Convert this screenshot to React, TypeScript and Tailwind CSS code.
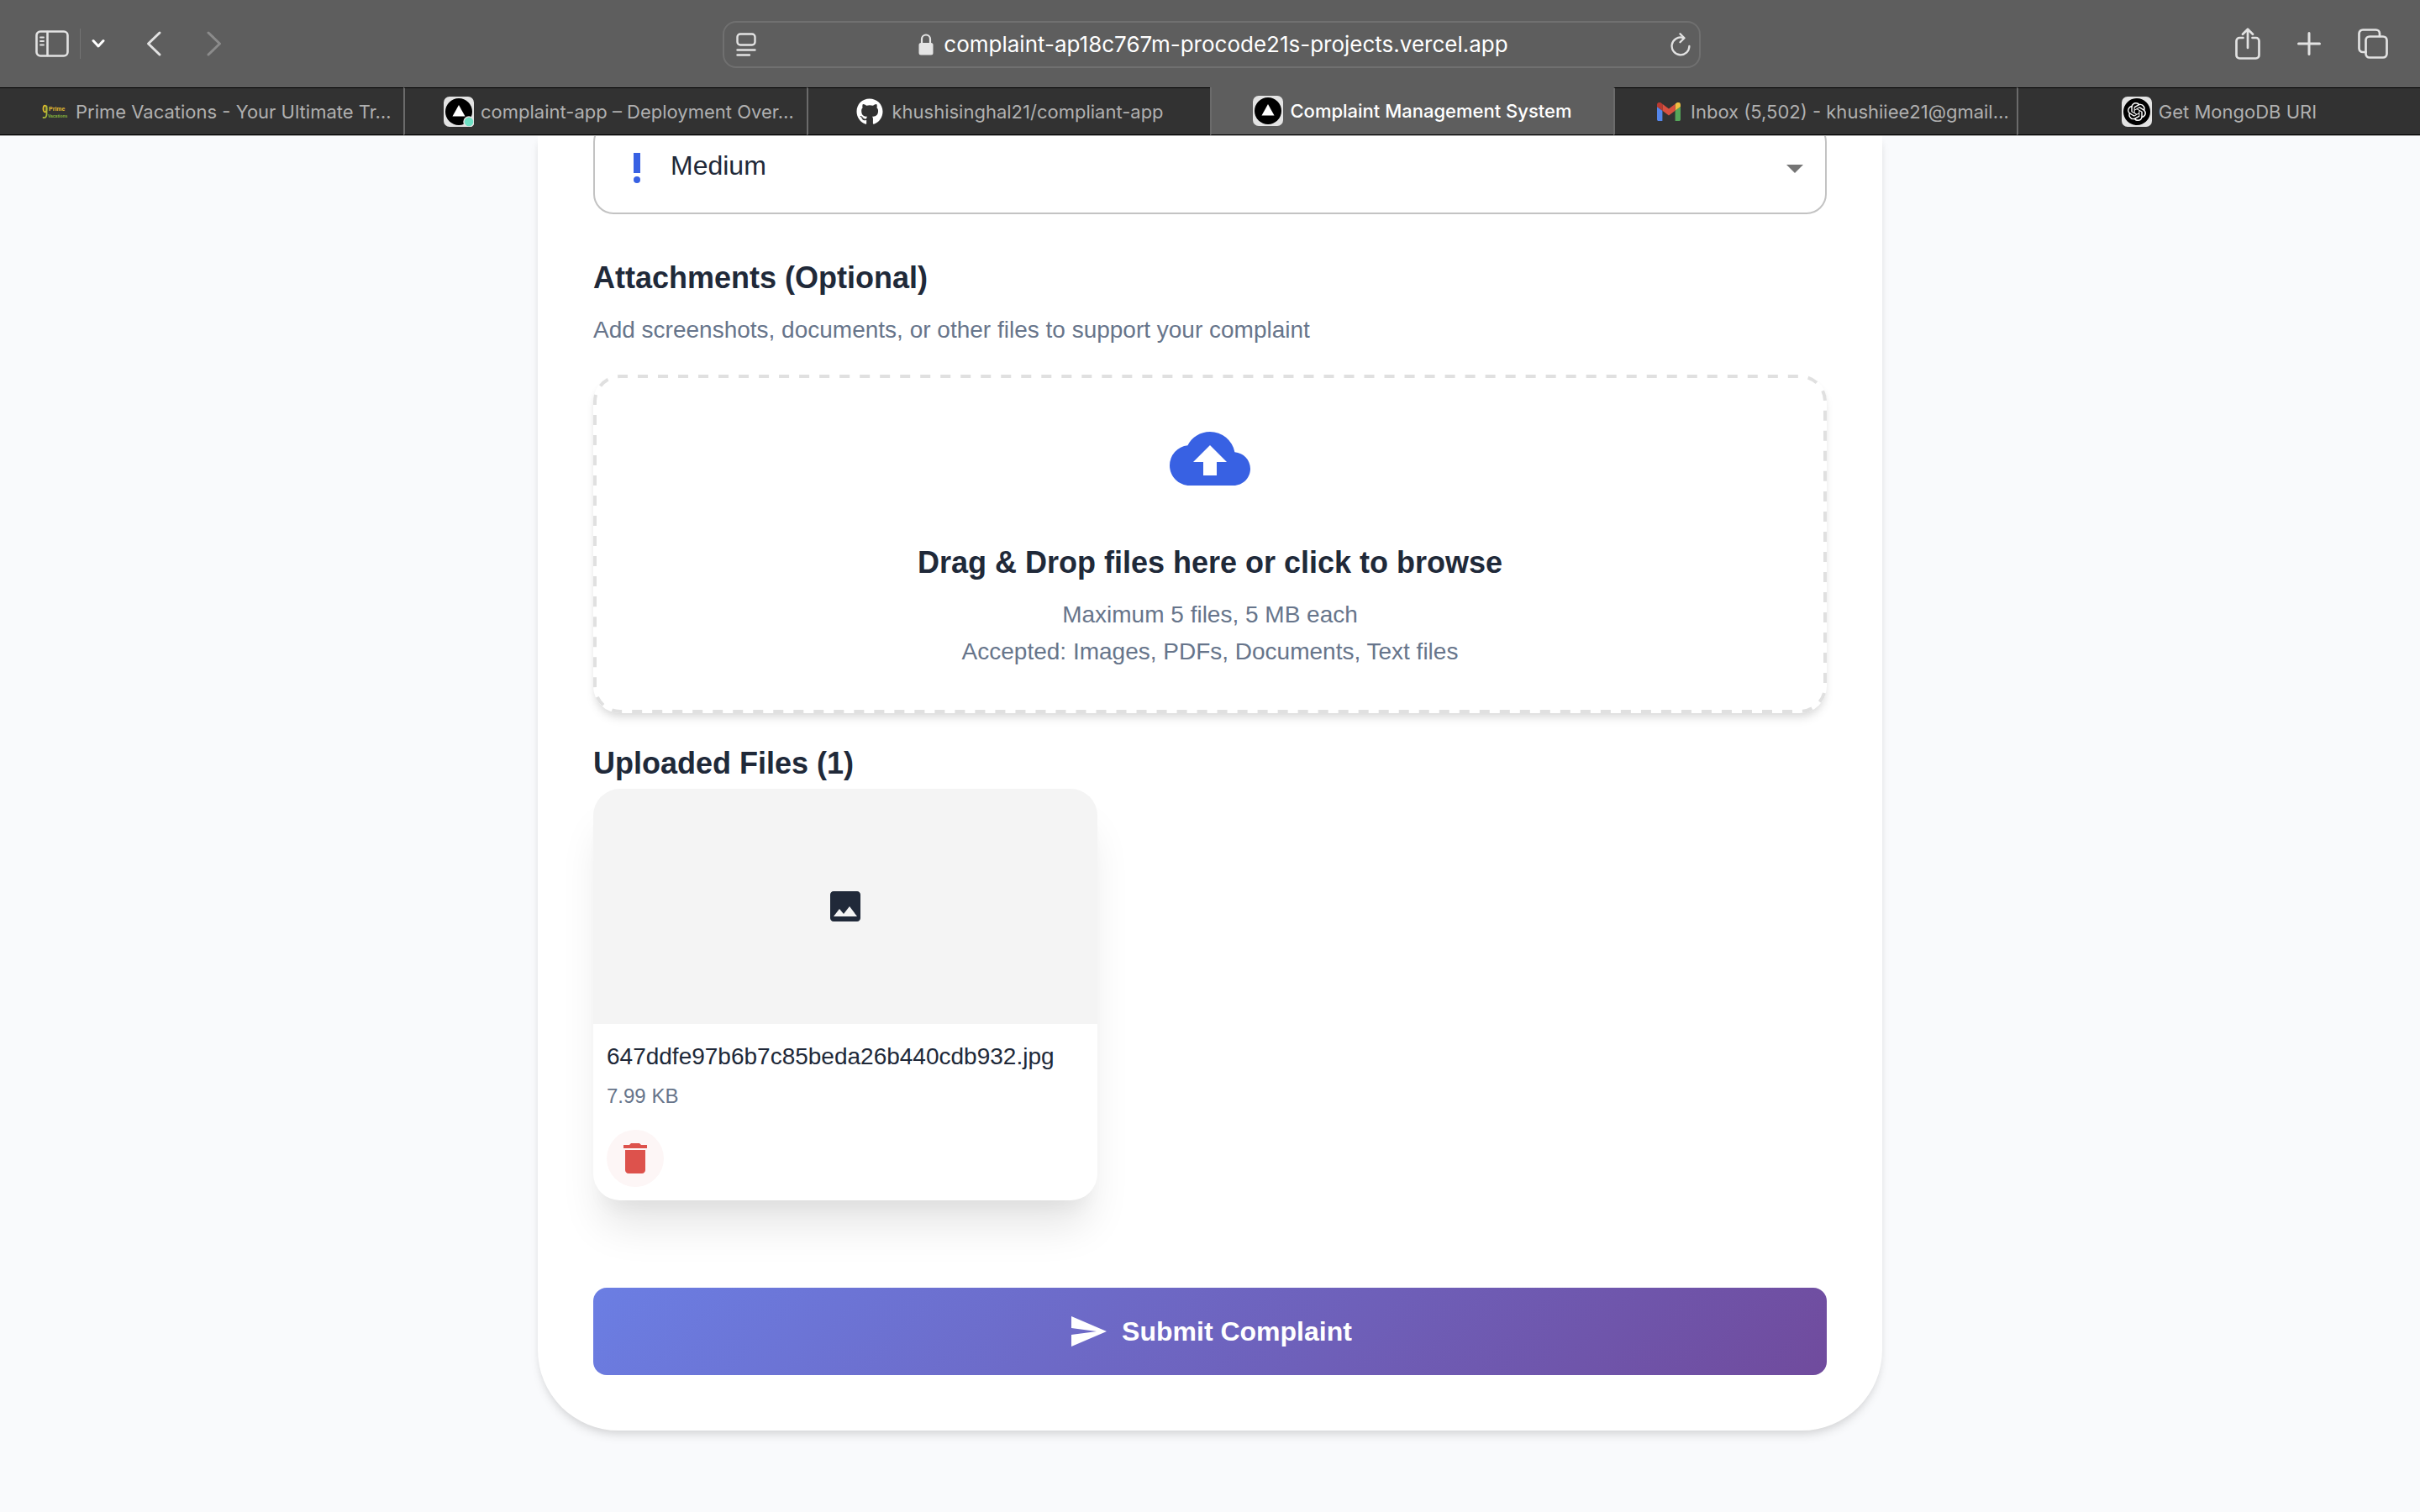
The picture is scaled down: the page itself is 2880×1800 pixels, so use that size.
import { useState, type ReactNode } from "react";
import {
  MdArrowDropDown,
  MdCloudUpload,
  MdDelete,
  MdImage,
  MdPriorityHigh,
  MdSend,
} from "react-icons/md";
import { SiOpenai } from "react-icons/si";
import { FaGithub } from "react-icons/fa";

const line = {
  fill: "none",
  stroke: "currentColor",
  strokeWidth: 3,
  strokeLinecap: "round" as const,
  strokeLinejoin: "round" as const,
};

function SidebarIcon() {
  return (
    <svg className="h-8 w-10" viewBox="0 0 40 32" {...line} strokeWidth="2.6" aria-hidden="true">
      <rect x="1.5" y="1.5" width="37" height="29" rx="4.5" />
      <path d="M14.5 2v28" />
      <path d="M6 8.500h4M6 13h4M6 17.500h4" strokeWidth="1.800" />
    </svg>
  );
}

function ReaderIcon() {
  return (
    <svg className="h-7 w-6" viewBox="0 0 24 28" {...line} strokeWidth="2.4" aria-hidden="true">
      <rect x="1.5" y="1.5" width="21" height="13" rx="3.5" />
      <path d="M1.5 20.5h21M1.5 26.5h14.5" />
    </svg>
  );
}

function LockIcon() {
  return (
    <svg className="h-[26px] w-[18px] text-[#e4e4e4]" viewBox="0 0 18 26" aria-hidden="true">
      <rect x="0.5" y="11" width="17" height="14.5" rx="2.5" fill="currentColor" />
      <path d="M4 12V6.5a5 5 0 0 1 10 0V12" fill="none" stroke="currentColor" strokeWidth="2.2" />
    </svg>
  );
}

function ReloadIcon() {
  return (
    <svg className="h-7 w-6" viewBox="0 0 24 28" {...line} strokeWidth="2.3" aria-hidden="true">
      <path d="M14.5 5.8A10.4 10.4 0 1 0 22.4 16" />
      <path d="M11.5 1.3l5 5-5 5" />
    </svg>
  );
}

function ShareIcon() {
  return (
    <svg className="h-[38px] w-[30px]" viewBox="0 0 30 38" {...line} strokeWidth="2.7" aria-hidden="true">
      <path d="M9.5 12H5.2a3.7 3.7 0 0 0-3.7 3.7v17.1a3.7 3.7 0 0 0 3.7 3.7h19.6a3.7 3.7 0 0 0 3.7-3.7V15.700a3.700 3.700 0 0 0-3.700-3.700H20.500" />
      <path d="M15 24V2M9 7.800l6-6 6 6" />
    </svg>
  );
}

function TabsIcon() {
  return (
    <svg className="h-9 w-9" viewBox="0 0 36 36" {...line} strokeWidth="2.7" aria-hidden="true">
      <rect x="9.500" y="9.500" width="25" height="25" rx="4.500" />
      <path d="M9.500 28H6a4.500 4.500 0 0 1-4.500-4.500V6A4.500 4.500 0 0 1 6 1.500h15.500A4.500 4.500 0 0 1 26 6v3" />
    </svg>
  );
}

function PrimeMark() {
  return (
    <svg className="h-7 w-7 overflow-visible" viewBox="0 0 28 28" aria-hidden="true">
      <g fill="none" strokeLinecap="round" strokeWidth="1.8">
        <ellipse cx="3.500" cy="10.500" rx="2" ry="3.800" stroke="#e0bd2c" />
        <path d="M5.500 7.500V17c0 3-1.500 4.500-4 4" stroke="#a8b83a" />
      </g>
      <text x="8" y="13" className="font-['Liberation_Sans',sans-serif] text-[7px] font-bold" fill="#e3bd30">
        Prime
      </text>
      <text x="7" y="21" className="font-['Liberation_Sans',sans-serif] text-[5px] font-bold" fill="#86b83c">
        Vacations
      </text>
    </svg>
  );
}

function VercelMark({ ready = false }: { ready?: boolean }) {
  return (
    <svg className="size-9" viewBox="0 0 36 36" aria-hidden="true">
      <rect width="36" height="36" rx="7" fill="#e3e3e3" />
      <circle cx="18" cy="18" r="16" fill="#000" />
      <path d="M18 10l7.500 13.500h-15z" fill="#fff" />
      {ready && <circle cx="30" cy="30" r="6" fill="#6fe0c4" stroke="#e3e3e3" strokeWidth="1.500" />}
    </svg>
  );
}

function GmailMark() {
  return (
    <svg className="h-[22px] w-7" viewBox="0 0 28 22" aria-hidden="true">
      <path d="M0 5v15.200C0 21.200.8 22 1.900 22h4.500V9.800z" fill="#5486ea" />
      <path d="M21.600 22h4.500c1.100 0 1.900-.8 1.900-1.800V5l-6.400 4.800z" fill="#55a65a" />
      <path d="M21.600 1.700v8.100L28 5V2.500c0-2.300-2.700-3.400-4.500-2.200z" fill="#efbf41" />
      <path d="M6.400 9.800V1.700L14 7.400l7.600-5.700v8.100L14 15.500z" fill="#d95040" />
      <path d="M0 2.500V5l6.400 4.800V1.700L4.500.3C2.700-1 0 .2 0 2.500z" fill="#b83a30" />
    </svg>
  );
}

function ChatMark() {
  return (
    <span className="flex size-9 items-center justify-center rounded-[7px] bg-[#e3e3e3]">
      <span className="flex size-8 items-center justify-center rounded-full bg-black">
        <SiOpenai className="size-[22px] text-white" aria-hidden="true" />
      </span>
    </span>
  );
}

interface Tab {
  title: string;
  icon: ReactNode;
  active?: boolean;
  cut?: boolean;
}

const tabs: Tab[] = [
  { title: "Prime Vacations - Your Ultimate Tr…", icon: <PrimeMark />, cut: true },
  { title: "complaint-app – Deployment Over…", icon: <VercelMark ready />, cut: true },
  {
    title: "khushisinghal21/compliant-app",
    icon: <FaGithub className="size-8 text-white" aria-hidden="true" />,
  },
  { title: "Complaint Management System", icon: <VercelMark />, active: true },
  { title: "Inbox (5,502) - khushiiee21@gmail…", icon: <GmailMark />, cut: true },
  { title: "Get MongoDB URI", icon: <ChatMark /> },
];

function BrowserTab({ title, icon, active, cut }: Tab) {
  return (
    <button
      type="button"
      role="tab"
      aria-selected={!!active}
      className={`flex h-full min-w-0 items-center gap-2 overflow-hidden border-b border-l-2 border-b-black border-l-[#6b6b6b] text-[22px] leading-7 whitespace-nowrap first:border-l-0 ${
        cut ? "justify-start pl-[46px]" : "justify-center"
      } ${
        active
          ? "bg-[#5e5e5e] font-medium text-white"
          : "border-t border-t-black bg-[#323232] text-[#b0b0b0]"
      }`}
    >
      <span className="flex size-9 shrink-0 items-center justify-center">{icon}</span>
      <span>{title}</span>
    </button>
  );
}

function BrowserBar() {
  return (
    <header className="relative z-10 border-b border-[#b5b5b5] bg-[#5e5e5e] font-['Inter',sans-serif]">
      <div className="flex h-26 items-center justify-between px-10 text-[#e2e2e2]">
        <div className="flex flex-1 items-center pl-0.5">
          <button type="button" aria-label="Show sidebar">
            <SidebarIcon />
          </button>
          <span className="mx-[13px] h-9 w-px bg-[#747474]" />
          <button type="button" aria-label="Tab groups">
            <svg className="h-3 w-4 text-white" viewBox="0 0 16 12" {...line} aria-hidden="true">
              <path d="M2 2.500l6 6.500 6-6.500" />
            </svg>
          </button>
          <button type="button" aria-label="Back" className="ml-12">
            <svg className="h-8 w-5" viewBox="0 0 20 32" {...line} aria-hidden="true">
              <path d="M17 3L3.500 16 17 29" />
            </svg>
          </button>
          <button type="button" aria-label="Forward" disabled className="ml-13 text-[#8b8b8b]">
            <svg className="h-8 w-5" viewBox="0 0 20 32" {...line} aria-hidden="true">
              <path d="M3 3l13.500 13L3 29" />
            </svg>
          </button>
        </div>
        <div className="mt-px flex h-14 w-[1164px] items-center justify-between rounded-2xl border-2 border-[#707070] pr-2.5 pl-3.5">
          <button type="button" aria-label="Reader options">
            <ReaderIcon />
          </button>
          <div className="flex items-center gap-3 text-[26px] leading-8 text-white">
            <LockIcon />
            <span>complaint-ap18c767m-procode21s-projects.vercel.app</span>
          </div>
          <button type="button" aria-label="Reload page">
            <ReloadIcon />
          </button>
        </div>
        <div className="-mr-0.5 flex flex-1 items-center justify-end gap-11">
          <button type="button" aria-label="Share">
            <ShareIcon />
          </button>
          <button type="button" aria-label="New tab">
            <svg className="size-7" viewBox="0 0 28 28" {...line} aria-hidden="true">
              <path d="M14 1.500v25M1.500 14h25" />
            </svg>
          </button>
          <button type="button" aria-label="Tab overview">
            <TabsIcon />
          </button>
        </div>
      </div>
      <div role="tablist" className="grid h-[57px] grid-cols-6">
        {tabs.map((tab) => (
          <BrowserTab key={tab.title} {...tab} />
        ))}
      </div>
    </header>
  );
}

function PrioritySelect() {
  const [priority, setPriority] = useState("Medium");
  return (
    <div className="relative -mt-[17px] text-[32px] leading-10">
      <MdPriorityHigh
        className="pointer-events-none absolute top-[31px] left-7 size-12 text-[#3861e3]"
        aria-hidden="true"
      />
      <select
        aria-label="Priority"
        value={priority}
        onChange={(event) => setPriority(event.target.value)}
        className="h-[110px] w-full appearance-none rounded-3xl border-2 border-[#c3c3c3] bg-transparent pb-1.5 pl-[90px]"
      >
        <option>Low</option>
        <option>Medium</option>
        <option>High</option>
      </select>
      <MdArrowDropDown
        className="pointer-events-none absolute top-[31px] right-3.5 size-12 text-[#757575]"
        aria-hidden="true"
      />
    </div>
  );
}

function DropZone() {
  return (
    <button
      type="button"
      className="relative mt-[33px] flex w-full flex-col items-center rounded-[32px] bg-white pt-13 pb-[51px] shadow-[0_8px_12px_-2px_rgba(0,0,0,0.1),0_4px_8px_-2px_rgba(0,0,0,0.06)]"
    >
      <svg className="pointer-events-none absolute inset-0 h-full w-full" aria-hidden="true">
        <rect
          className="[height:calc(100%-4px)] [width:calc(100%-4px)]"
          x="2"
          y="2"
          rx="30"
          fill="none"
          stroke="#e0e0e0"
          strokeWidth="4"
          pathLength="3672"
          strokeDasharray="12 12"
          strokeDashoffset="3"
        />
      </svg>
      <MdCloudUpload className="size-24 text-[#3861e3]" aria-hidden="true" />
      <span className="mt-[54px] text-4xl leading-11 font-bold">
        Drag &amp; Drop files here or click to browse
      </span>
      <span className="mt-[18px] text-[28px] leading-11 text-[#67758b]">
        Maximum 5 files, 5 MB each
      </span>
      <span className="text-[28px] leading-11 text-[#67758b]">
        Accepted: Images, PDFs, Documents, Text files
      </span>
    </button>
  );
}

function FileCard({ name, size }: { name: string; size: string }) {
  return (
    <article className="mt-2 w-full max-w-[600px] overflow-hidden rounded-[32px] bg-white shadow-[0_40px_50px_-10px_rgba(0,0,0,0.1),0_20px_20px_-10px_rgba(0,0,0,0.04)]">
      <div className="flex h-70 items-center justify-center bg-[#f4f4f4]">
        <MdImage className="size-12" aria-hidden="true" />
      </div>
      <div className="px-4 pt-[19px] pb-4">
        <p className="text-[28px] leading-10">{name}</p>
        <p className="mt-[9px] text-2xl leading-9 text-[#67758b]">{size}</p>
        <button
          type="button"
          aria-label={`Remove ${name}`}
          className="mt-[22px] flex size-17 items-center justify-center rounded-full bg-[#fdf6f6] text-[#dd524c]"
        >
          <MdDelete className="size-12" aria-hidden="true" />
        </button>
      </div>
    </article>
  );
}

export default function App() {
  return (
    <div className="flex min-h-screen flex-col bg-[#f9fafc] font-['Liberation_Sans',sans-serif] text-[#202939]">
      <BrowserBar />
      <main className="flex-1 overflow-hidden pb-24">
        <form
          onSubmit={(event) => event.preventDefault()}
          className="mx-auto flow-root w-full max-w-[1600px] rounded-b-[96px] bg-white px-[66px] pb-[66px] shadow-[0_8px_12px_-2px_rgba(0,0,0,0.1),0_4px_8px_-2px_rgba(0,0,0,0.06)]"
        >
          <PrioritySelect />
          <h2 className="mt-[54px] text-4xl leading-11 font-bold">Attachments (Optional)</h2>
          <p className="mt-5 text-[28px] leading-10 text-[#67758b]">
            Add screenshots, documents, or other files to support your complaint
          </p>
          <DropZone />
          <h2 className="mt-[38px] text-4xl leading-11 font-bold">Uploaded Files (1)</h2>
          <FileCard name="647ddfe97b6b7c85beda26b440cdb932.jpg" size="7.99 KB" />
          <button
            type="submit"
            className="mt-26 flex h-26 w-full items-center justify-center gap-4 rounded-2xl bg-[linear-gradient(135deg,#6b7ee3_0%,#704b9d_100%)] text-[32px] leading-10 font-bold text-white"
          >
            <MdSend className="size-12" aria-hidden="true" />
            Submit Complaint
          </button>
        </form>
      </main>
    </div>
  );
}
